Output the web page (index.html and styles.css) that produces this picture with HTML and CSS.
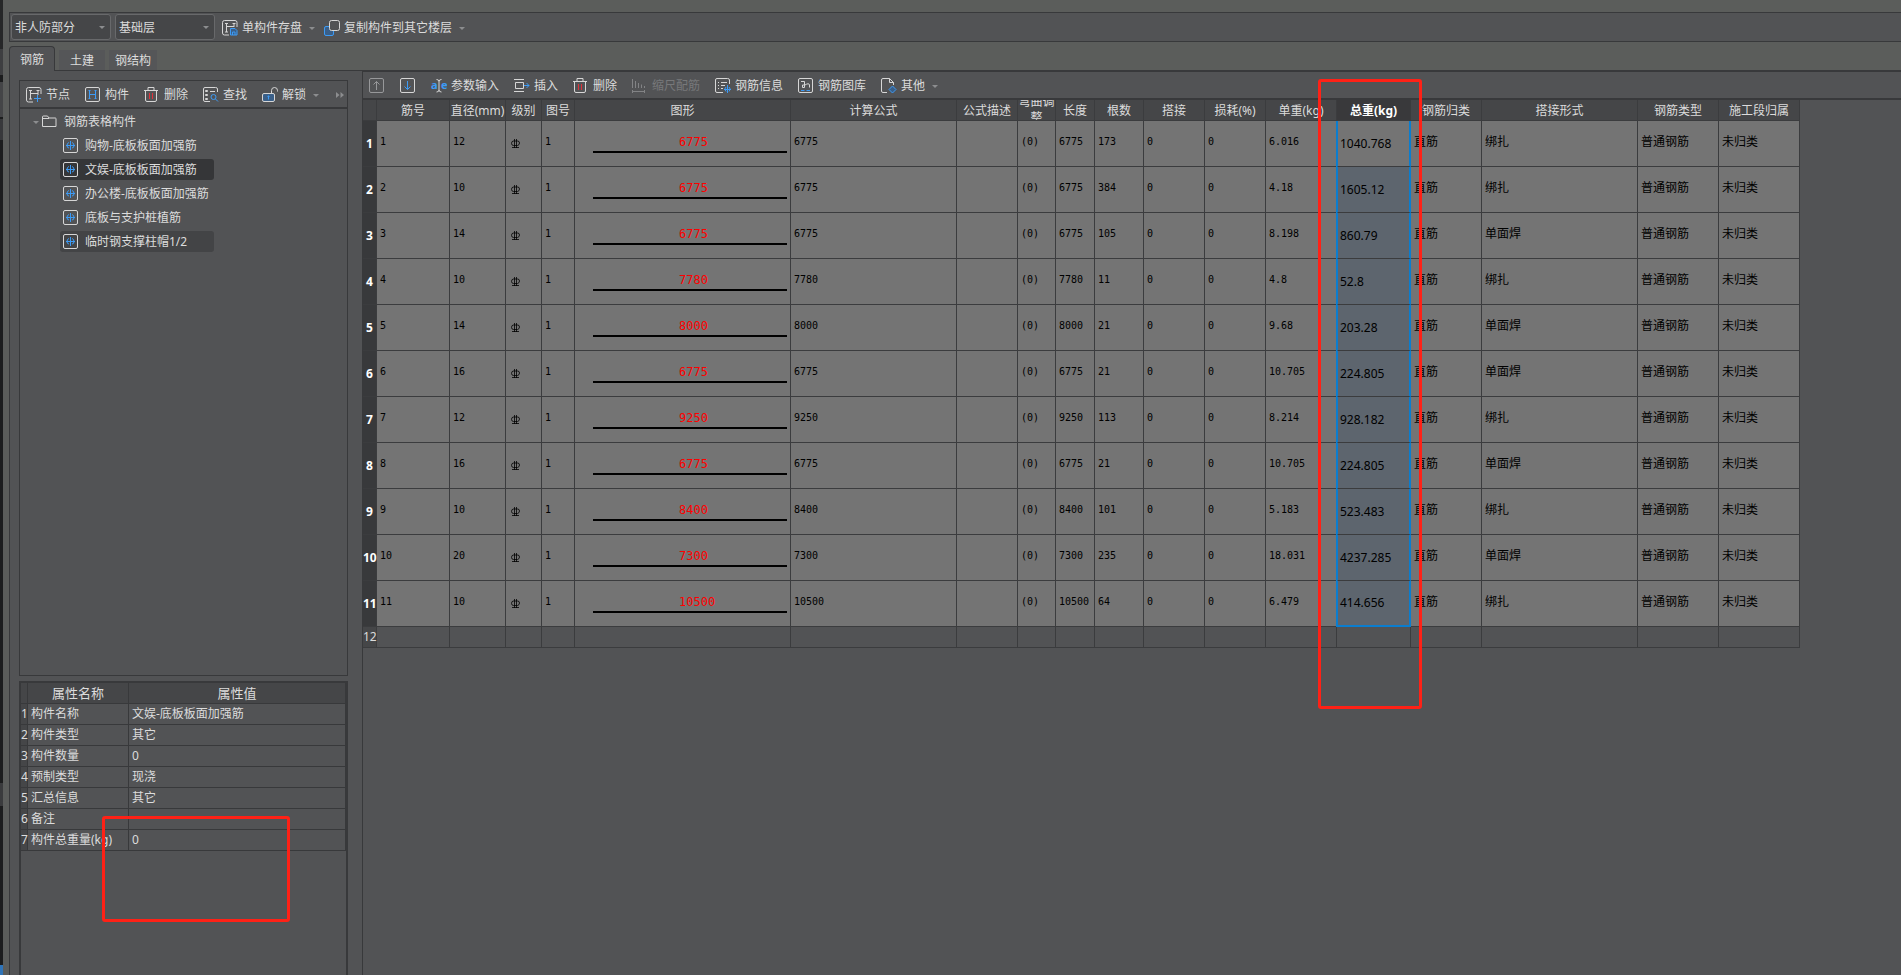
FILE: index.html
```
<!DOCTYPE html>
<html lang="zh-CN">
<head>
    <meta charset="UTF-8">
    <title>表格算量</title>
    <link rel="stylesheet" href="styles.css">
</head>
<body>
    <svg class="defs" aria-hidden="true">
        <symbol id="i-save" viewBox="0 0 16 16">
            <path class="w" d="M7 15H2.5Q.5 15 .5 13V2.5Q.5 .5 2.5 .5H13Q15 .5 15 2.5V7"/>
            <path class="w" d="M4.500 3v9M3 3.500h3M3 12h3M12 3v4M10.500 3.500h3M4.500 6.500H12"/>
            <path class="b bf" d="M8.500 8.500H13l2 2v4.500H8.500zM10.500 15v-3h2.500v3"/>
        </symbol>
        <symbol id="i-copy" viewBox="0 0 16 16">
            <rect class="b bf" x=".5" y="6.5" width="9" height="9" rx="1.5"/>
            <rect class="w bg" x="5.500" y=".5" width="10" height="10" rx="2"/>
        </symbol>
        <symbol id="i-node" viewBox="0 0 16 16">
            <path class="w" d="M7 15H2.5Q.5 15 .5 13V2.500Q.5 .5 2.500 .5H13Q15 .5 15 2.500V7"/>
            <path class="w" d="M4.500 3v9M3 3.500h3M3 12h3M12 3v5M10.500 3.500h3M4.500 6.500H12"/>
            <path class="b" d="M11.500 8v7M8 11.500h7"/>
        </symbol>
        <symbol id="i-member" viewBox="0 0 16 16">
            <rect class="w" x=".5" y=".5" width="14" height="14" rx="1.5"/>
            <path class="b" d="M4.500 3v9M3.500 3.500h2M3.500 11.500h2M10.500 3v9M9.500 3.500h2M9.500 11.500h2M4.500 7.500h6"/>
        </symbol>
        <symbol id="i-trash" viewBox="0 0 16 16">
            <path class="w" d="M0 3.500h14M4 3V.5h6V3M1.500 4v9q0 1.500 1.500 1.500h8q1.500 0 1.500-1.500V4"/>
            <path class="r" d="M5.500 6v6M8.500 6v6"/>
        </symbol>
        <symbol id="i-find" viewBox="0 0 16 16">
            <path class="w" d="M7 14.500H2Q.5 14.500 .5 13V2Q.5 .5 2 .5H12.500Q14.500 .5 14.500 2V5"/>
            <path class="w" d="M2.500 3.500h2v1h-2zM2.500 7.500h2v1h-2zM2.500 11.500h2v1h-2zM7 4.500h5"/>
            <circle class="b" cx="10.500" cy="10" r="2.500"/>
            <path class="b" d="M12.500 12l2.500 2.500"/>
        </symbol>
        <symbol id="i-unlock" viewBox="0 0 16 16">
            <rect class="w bf" x=".5" y="6.500" width="12" height="8" rx="1.500"/>
            <path class="w" d="M9.500 6V3.500Q9.500 .5 12.500 .5T15.500 3.500V4.500"/>
            <path class="b" d="M6.500 8.500v4M5.500 9.500h2"/>
        </symbol>
        <symbol id="i-up" viewBox="0 0 16 16">
            <rect class="g" x=".5" y=".5" width="14" height="14" rx="1.500"/>
            <path class="g" d="M7.500 12V3.500M4.500 6.500l3-3 3 3"/>
        </symbol>
        <symbol id="i-down" viewBox="0 0 16 16">
            <rect class="w" x=".5" y=".5" width="14" height="14" rx="1.500"/>
            <path class="b" d="M7.500 3v8.500M4.500 8.500l3 3 3-3"/>
        </symbol>
        <symbol id="i-insert" viewBox="0 0 16 16">
            <path class="w" d="M0 1.500h10M0 13.500h10M9.500 4.500h-8v6h8z"/>
            <path class="b" d="M10 7.500h5M12.500 5l2.500 2.500-2.500 2.500"/>
        </symbol>
        <symbol id="i-scale" viewBox="0 0 16 16">
            <path class="g" d="M.5 1v9M3.500 3v7M6.500 5v5M9.500 6.500V10M12.500 8v2M.5 12v3M12.500 12v3M0 13.500h13"/>
        </symbol>
        <symbol id="i-info" viewBox="0 0 16 16">
            <path class="w" d="M8 14.500H2Q.5 14.500 .5 13V2Q.5 .5 2 .5H12.500Q14.500 .5 14.500 2V6"/>
            <path class="w" d="M3 4.500h1M6 4.500h6M3 7.500h1M6 7.500h4M3 10.500h1M6 10.500h2"/>
            <path class="b" d="M12.500 7v8M11 9q-2.500 2 0 4.500M14 9q2.500 2 0 4.500M9 11.500h7"/>
        </symbol>
        <symbol id="i-lib" viewBox="0 0 16 16">
            <rect class="w" x=".5" y=".5" width="14" height="14" rx="1.500"/>
            <path class="w" d="M3 3.500h3.500v6H4.500V7H7q4-2.500 4.500 0v2.500"/>
            <path class="b" d="M3 12.500h3.500M8.500 12.500H12"/>
        </symbol>
        <symbol id="i-other" viewBox="0 0 16 16">
            <path class="w" d="M6 14.500H2Q.5 14.500 .5 13V2Q.5 .5 2 .5h6.500l4 4V7M8.500 .5v4h4"/>
            <path class="b bf" d="M11.500 8l3.500 3.500-3.500 3.500L8 11.500z"/>
        </symbol>
        <symbol id="i-folder" viewBox="0 0 16 16">
            <path class="w" d="M.5 12.500V3q0-1 1-1h4l1.500 2H13.500q.5 0 .5 1v7.500zM1 4.500h6"/>
        </symbol>
        <symbol id="i-bar" viewBox="0 0 16 16">
            <rect class="w" x=".5" y=".5" width="14" height="14" rx="1.500"/>
            <path class="b" d="M7.500 3v9M6 4.500q-2 .5-2 3t2 2.500M9 4.500q2 .5 2 3T9 10M3 7.500h9"/>
        </symbol>
        <symbol id="i-grade" viewBox="0 0 10 10">
            <path class="k" d="M2.500 2h4Q8.500 2 8.500 4T6.500 6.500h-4Q.5 6.500 .5 4.300T2.500 2M3.500 0v9M5.500 0v9M1 8.500h7"/>
        </symbol>
    </svg>

    <div class="app">
        <div class="behind"></div>
        <div class="dialog">
            <div class="topbar">
                <label class="drop"><select aria-label="部分"><option>非人防部分</option></select></label>
                <label class="drop"><select aria-label="楼层"><option>基础层</option></select></label>
                <button class="tool"><svg><use href="#i-save"/></svg>单构件存盘<i class="caret"></i></button>
                <button class="tool"><svg><use href="#i-copy"/></svg>复制构件到其它楼层<i class="caret"></i></button>
            </div>

            <div class="tabs">
                <button class="tab current">钢筋</button>
                <button class="tab">土建</button>
                <button class="tab">钢结构</button>
            </div>

            <div class="pane">
                <div class="side">
                    <div class="box">
                        <div class="toolbar">
                            <button class="tool"><svg><use href="#i-node"/></svg>节点</button>
                            <button class="tool"><svg><use href="#i-member"/></svg>构件</button>
                            <button class="tool"><svg><use href="#i-trash"/></svg>删除</button>
                            <button class="tool"><svg><use href="#i-find"/></svg>查找</button>
                            <button class="tool"><svg><use href="#i-unlock"/></svg>解锁<i class="caret"></i></button>
                            <button class="more" aria-label="更多"><svg viewBox="0 0 8 6"><path d="M0 0l3.500 3L0 6zM4.500 0L8 3 4.500 6z"/></svg></button>
                        </div>
                        <div class="tree">
                            <div class="root"><i class="caret"></i><svg><use href="#i-folder"/></svg>钢筋表格构件</div>
                            <ul>
                                <li><svg><use href="#i-bar"/></svg>购物-底板板面加强筋</li>
                                <li class="current"><svg><use href="#i-bar"/></svg>文娱-底板板面加强筋</li>
                                <li><svg><use href="#i-bar"/></svg>办公楼-底板板面加强筋</li>
                                <li><svg><use href="#i-bar"/></svg>底板与支护桩植筋</li>
                                <li class="hover"><svg><use href="#i-bar"/></svg>临时钢支撑柱帽1/2</li>
                            </ul>
                        </div>
                    </div>
                    <div class="props">
                        <table>
                            <thead>
                                <tr><th class="no"></th><th class="name">属性名称</th><th>属性值</th></tr>
                            </thead>
                            <tbody>
                                <tr><th>1</th><td>构件名称</td><td>文娱-底板板面加强筋</td></tr>
                                <tr><th>2</th><td>构件类型</td><td>其它</td></tr>
                                <tr><th>3</th><td>构件数量</td><td>0</td></tr>
                                <tr><th>4</th><td>预制类型</td><td>现浇</td></tr>
                                <tr><th>5</th><td>汇总信息</td><td>其它</td></tr>
                                <tr><th>6</th><td>备注</td><td></td></tr>
                                <tr><th>7</th><td>构件总重量(kg)</td><td>0</td></tr>
                            </tbody>
                        </table>
                    </div>
                </div>

                <div class="main">
                    <div class="toolbar">
                        <button class="tool" aria-label="上移"><svg><use href="#i-up"/></svg></button>
                        <button class="tool" aria-label="下移"><svg><use href="#i-down"/></svg></button>
                        <button class="tool">
                            <svg viewBox="0 0 16 16">
                                <text class="ae" x="0" y="11">a</text>
                                <text class="ae" x="10" y="11">e</text>
                                <path class="w" d="M5.500 1.500Q8 1.500 8 3.500V12Q8 14 5.500 14M10.500 1.500Q8 1.500 8 3.500M8 12Q8 14 10.500 14"/>
                            </svg>参数输入</button>
                        <button class="tool"><svg><use href="#i-insert"/></svg>插入</button>
                        <button class="tool"><svg><use href="#i-trash"/></svg>删除</button>
                        <button class="tool" disabled><svg><use href="#i-scale"/></svg>缩尺配筋</button>
                        <button class="tool"><svg><use href="#i-info"/></svg>钢筋信息</button>
                        <button class="tool"><svg><use href="#i-lib"/></svg>钢筋图库</button>
                        <button class="tool"><svg><use href="#i-other"/></svg>其他<i class="caret"></i></button>
                    </div>
                    <table class="grid">
                        <colgroup>
                            <col class="c-no"><col class="c-bar"><col class="c-dia"><col class="c-grade"><col class="c-pic">
                            <col class="c-shape"><col class="c-formula"><col class="c-m"><col class="c-bend"><col class="c-len">
                            <col class="c-count"><col class="c-m"><col class="c-m"><col class="c-unit"><col class="c-total">
                            <col class="c-unit"><col class="c-joint"><col class="c-type"><col class="c-type">
                        </colgroup>
                        <thead>
                            <tr>
                                <th></th><th>筋号</th><th>直径(mm)</th><th>级别</th><th>图号</th><th>图形</th><th>计算公式</th>
                                <th>公式描述</th><th class="bend"><div class="clip">弯曲调整</div></th><th>长度</th><th>根数</th><th>搭接</th>
                                <th>损耗(%)</th><th>单重(kg)</th><th class="current">总重(kg)</th><th>钢筋归类</th>
                                <th>搭接形式</th><th>钢筋类型</th><th>施工段归属</th>
                            </tr>
                        </thead>
                        <tbody id="rows"></tbody>
                    </table>
                </div>
            </div>
        </div>
        <div class="mark mark-total"></div>
        <div class="mark mark-weight"></div>
    </div>
    <script src="script.js"></script>
</body>
</html>
```

FILE: styles.css
```
* {
    margin: 0;
    padding: 0;
    box-sizing: border-box;
}
body {
    font: 12px/16px "Noto Sans", "Noto Sans CJK SC", sans-serif;
    color: #dcdcdc;
    background: #5b5d5b;
    overflow: hidden;
}
button, select {
    font: inherit;
    color: inherit;
    background: none;
    border: 0;
}
ul {
    list-style: none;
}
table {
    border-collapse: separate;
    border-spacing: 0;
    table-layout: fixed;
}
th {
    font-weight: normal;
}

/* 图标 */
.defs {
    position: absolute;
    width: 0;
    height: 0;
}
.w, .b, .r, .g, .k {
    fill: none;
    stroke: #d6d6d6;
}
.b {
    stroke: #3d9bf5;
}
.r {
    stroke: #e0313a;
}
.g {
    stroke: #97989a;
}
.k {
    stroke: #000;
    stroke-width: 0.8;
}
.bf {
    fill: #3a5f88;
}
.bg {
    fill: #525355;
}
.ae {
    font: bold 11px "Noto Sans", sans-serif;
    fill: #3d9bf5;
}

.app {
    position: relative;
    display: flex;
    height: 100vh;
    overflow: hidden;
}
.behind {
    width: 3px;
    background: linear-gradient(#262728 49px, #3e3f41 49px 75px, #1c1d1e 75px 82px, #444547 82px 117px, #1c1d1e 117px 119px, #38393b 119px 140px, #1c1d1e 140px 783px, #3a3b3d 783px 806px, #1c1d1e 806px 965px, #2f74b8 965px);
}
.dialog {
    flex: 1;
    min-width: 0;
    display: flex;
    flex-direction: column;
    padding: 12px 0 0 6px;
}

/* 顶部工具条 */
.topbar {
    display: flex;
    align-items: center;
    height: 30px;
    padding-left: 1px;
    background: #525355;
    border: 1px solid #38393b;
    border-right: 0;
}
.drop {
    position: relative;
    width: 100px;
    margin-right: 4px;
}
.drop select {
    display: block;
    appearance: none;
    width: 100%;
    height: 26px;
    padding: 2px 3px 0;
    background: #454648;
    border: 1px solid #68696b;
    border-radius: 3px;
}
.drop:after {
    content: "";
    position: absolute;
    right: 6px;
    top: 12px;
    border: 3px solid transparent;
    border-top-color: #8c8d8f;
    border-bottom: 0;
}
.topbar .tool {
    margin-left: 3px;
    margin-right: 6px;
    padding-top: 2px;
}
.tool {
    display: flex;
    align-items: center;
    gap: 4px;
    white-space: nowrap;
}
.tool svg, .tree svg {
    flex: none;
    width: 16px;
    height: 16px;
}
.tool:disabled {
    color: #77787a;
}
.tool:disabled svg {
    opacity: 0.7;
}
.caret {
    margin-left: 3px;
    border: 3px solid transparent;
    border-top-color: #8c8d8f;
    border-bottom: 0;
}

/* 页签 */
.tabs {
    display: flex;
    align-items: flex-end;
    gap: 4px;
    height: 28px;
    padding-top: 4px;
}
.tab {
    width: 46px;
    height: 20px;
    padding-top: 2px;
    background: #555658;
}
.tab:last-child {
    width: 48px;
}
.tab.current {
    z-index: 1;
    height: 25px;
    margin-bottom: -1px;
    background: #525355;
    border: 1px solid #38393b;
    border-bottom: 0;
    border-radius: 4px 4px 0 0;
}
.pane {
    flex: 1;
    min-height: 0;
    display: flex;
    gap: 14px;
    padding-left: 9px;
    background: #525355;
    border-left: 1px solid #38393b;
    border-top: 1px solid #38393b;
}

/* 左侧 */
.side {
    flex: none;
    width: 329px;
    display: flex;
    flex-direction: column;
    gap: 5px;
    padding-top: 9px;
}
.box {
    height: 596px;
    border: 1px solid #38393b;
}
.toolbar {
    display: flex;
    align-items: center;
    gap: 15px;
    height: 28px;
    padding-top: 2px;
    padding-left: 6px;
    border-bottom: 2px solid #38393b;
}
.more {
    margin-left: auto;
    padding-right: 3px;
}
.more svg {
    display: block;
    width: 8px;
    height: 6px;
    fill: #8c8d8f;
}
.tree {
    padding-top: 1px;
}
.root {
    display: flex;
    align-items: center;
    height: 24px;
    padding-left: 10px;
}
.root svg {
    margin: 0 6px 0 3px;
}
.tree li {
    display: flex;
    align-items: center;
    gap: 6px;
    width: 154px;
    height: 21px;
    margin: 0 0 3px 40px;
    padding-left: 3px;
    border-radius: 3px;
    white-space: nowrap;
}
.tree ul {
    padding-top: 1px;
}
.tree li.current {
    background: #353638;
}
.tree li.hover {
    background: #434446;
}
.props {
    flex: 1;
    border: 2px solid #38393b;
    border-bottom: 0;
}
.props table {
    width: 325px;
}
.props th, .props td {
    height: 21px;
    padding: 0 3px;
    border-right: 1px solid #38393b;
    border-bottom: 1px solid #38393b;
    text-align: left;
    white-space: nowrap;
}
.props thead th {
    font-size: 13px;
    text-align: center;
    background: #454648;
}
.props tbody th {
    padding: 0;
    background: #454648;
}
.props .no {
    width: 7px;
}
.props .name {
    width: 101px;
}

/* 钢筋表格 */
.main {
    flex: 1;
    min-width: 0;
    overflow: hidden;
    border-left: 1px solid #38393b;
    border-top: 1px solid #38393b;
}
.grid {
    width: 1437px;
    color: #000;
}
.grid th, .grid td {
    border-right: 1px solid #3b3c3e;
    border-bottom: 1px solid #3b3c3e;
    white-space: nowrap;
}
.grid thead th {
    height: 21px;
    padding-top: 2px;
    color: #dcdcdc;
    background: #454648;
}
.grid thead th.bend {
    padding-top: 0;
}
.grid thead th.current {
    font-weight: bold;
    color: #fff;
    background: #39393b;
}
.clip {
    display: flex;
    align-items: center;
    height: 20px;
    overflow: hidden;
    white-space: normal;
}
.grid tbody th {
    font-weight: bold;
    color: #fff;
    background: #38393b;
}
.grid td {
    height: 46px;
    padding: 0 3px 4px;
    font-family: "DejaVu Sans Mono", "Noto Sans CJK SC", monospace;
    font-size: 10px;
    background: #747474;
}
.grid td.cn {
    padding-bottom: 3px;
    font-size: 12px;
}
.grid td.grade {
    padding: 0 0 0 5px;
}
.grade svg {
    display: block;
    width: 10px;
    height: 10px;
}
.grid td.shape {
    padding: 0 3px 0 18px;
    vertical-align: top;
}
.shape div {
    padding: 12px 0 0 86px;
    border-bottom: 2px solid #000;
    font-size: 12px;
    line-height: 18px;
    color: #f00;
}
.grid td.total {
    padding: 0 2px;
    font: 12px/16px "Noto Sans", sans-serif;
    background: #5d656e;
    border-left: 1px solid #0a7dcf;
    border-right: 2px solid #0a7dcf;
    box-shadow: -1px 0 #0a7dcf;
}
.grid tr:first-child td.total {
    background: #747474;
}
.grid tr.last td.total {
    border-bottom: 2px solid #0a7dcf;
}
.grid tr.empty th {
    font-weight: normal;
    color: #dcdcdc;
    background: #454648;
}
.grid tr.empty td {
    height: 21px;
    padding: 0;
    background: #525355;
}
.c-no { width: 14px; }
.c-bar { width: 73px; }
.c-dia { width: 56px; }
.c-grade { width: 36px; }
.c-pic { width: 33px; }
.c-shape { width: 216px; }
.c-formula { width: 166px; }
.c-m { width: 61px; }
.c-bend { width: 38px; }
.c-len { width: 39px; }
.c-count { width: 49px; }
.c-unit { width: 71px; }
.c-total { width: 74px; }
.c-joint { width: 156px; }
.c-type { width: 81px; }

/* 红框标注 */
.mark {
    position: absolute;
    border: 3px solid #ff2116;
    border-radius: 3px;
}
.mark-total {
    left: 1318px;
    top: 79px;
    width: 104px;
    height: 630px;
}
.mark-weight {
    left: 102px;
    top: 816px;
    width: 188px;
    height: 106px;
}
```

FILE: script.js
```
// 直径, 长度, 根数, 单重, 总重, 搭接形式
var data = [
    [12, 6775, 173, "6.016", "1040.768", "绑扎"],
    [10, 6775, 384, "4.18", "1605.12", "绑扎"],
    [14, 6775, 105, "8.198", "860.79", "单面焊"],
    [10, 7780, 11, "4.8", "52.8", "绑扎"],
    [14, 8000, 21, "9.68", "203.28", "单面焊"],
    [16, 6775, 21, "10.705", "224.805", "单面焊"],
    [12, 9250, 113, "8.214", "928.182", "绑扎"],
    [16, 6775, 21, "10.705", "224.805", "单面焊"],
    [10, 8400, 101, "5.183", "523.483", "绑扎"],
    [20, 7300, 235, "18.031", "4237.285", "单面焊"],
    [10, 10500, 64, "6.479", "414.656", "绑扎"]
];
var html = "";

function td(text, cls) {
    return "<td" + (cls ? " class='" + cls + "'" : "") + ">" + text + "</td>";
}

for (var i = 0; i < data.length; i++) {
    var d = data[i];
    html += "<tr" + (i == data.length - 1 ? " class='last'" : "") + "><th>" + (i + 1) + "</th>";
    html += td(i + 1) + td(d[0]);
    html += td("<svg><use href='#i-grade'/></svg>", "grade") + td(1);
    html += td("<div>" + d[1] + "</div>", "shape");
    html += td(d[1]) + td("") + td("(0)") + td(d[1]) + td(d[2]) + td(0) + td(0) + td(d[3]);
    html += td(d[4], "total") + td("直筋", "cn") + td(d[5], "cn");
    html += td("普通钢筋", "cn") + td("未归类", "cn") + "</tr>";
}

// 末尾空行
html += "<tr class='empty'><th>12</th>";
for (var j = 0; j < 18; j++) {
    html += td("");
}
html += "</tr>";
document.getElementById("rows").innerHTML = html;
```
